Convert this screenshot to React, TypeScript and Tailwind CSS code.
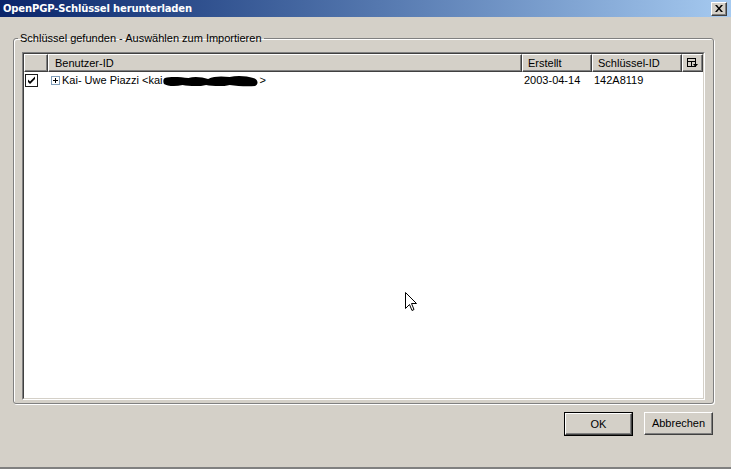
import React from "react";

const raised =
  "border border-t-white border-l-white border-r-[#404040] border-b-[#404040] shadow-[inset_-1px_-1px_0_#808080]";

function HeaderCell({ w, children, className = "" }: { w: string; children?: React.ReactNode; className?: string }) {
  return (
    <div className={`${w} h-[18px] shrink-0 bg-[#d4d0c8] ${raised} flex items-center ${className}`}>
      {children}
    </div>
  );
}

export default function App() {
  return (
    <div className="w-[731px] h-[469px] bg-[#d4d0c8] flex flex-col relative overflow-hidden font-['Liberation_Sans',sans-serif] text-[11px] text-black border-b-2 border-b-[#808080]">
      {/* Title bar */}
      <div className="h-[17px] shrink-0 flex items-center justify-between pl-[3px] pr-[4px] bg-gradient-to-r from-[#0a246a] to-[#a6caf0]">
        <span className="text-white font-bold text-[10px] leading-[13px] tracking-[-0.15px] font-['DejaVu_Sans',sans-serif]">
          OpenPGP-Schlüssel herunterladen
        </span>
        <div className={`w-[16px] h-[14px] bg-[#d4d0c8] ${raised} flex items-center justify-center`}>
          <svg width="8" height="7" viewBox="0 0 8 7">
            <path d="M0 0h2l2 2.5L6 0h2L5 3.5 8 7H6L4 4.5 2 7H0l3-3.5z" fill="#000" />
          </svg>
        </div>
      </div>

      {/* Group box */}
      <fieldset className="mt-[15px] ml-[13px] mr-[17px] h-[372px] border border-[#808080] rounded-[3px] shadow-[inset_1px_1px_0_#fff,1px_1px_0_#fff] px-[8px] pt-[7px] pb-[3px] min-w-0">
        <legend className="ml-[-4px] px-[2px] leading-[13px]">Schlüssel gefunden - Auswählen zum Importieren</legend>
        <div className="h-[348px] border border-t-[#808080] border-l-[#808080] border-r-white border-b-white">
          <div className="h-full bg-white border border-t-[#404040] border-l-[#404040] border-r-[#d4d0c8] border-b-[#d4d0c8] flex flex-col">
            {/* header */}
            <div className="flex h-[18px]">
              <HeaderCell w="w-[24px]" />
              <HeaderCell w="w-[474px]" className="pl-[6px]">Benutzer-ID</HeaderCell>
              <HeaderCell w="w-[70px]" className="pl-[5px]">Erstellt</HeaderCell>
              <HeaderCell w="w-[90px]" className="pl-[5px]">Schlüssel-ID</HeaderCell>
              <HeaderCell w="w-[21px]" className="justify-center">
                <svg width="11" height="10" viewBox="0 0 11 10">
                  <rect x="0.5" y="0.5" width="8" height="8" fill="none" stroke="#000" />
                  <path d="M0.5 3.5h8M4.5 3.5v5" stroke="#000" />
                  <path d="M6 6h5l-2.5 3z" fill="#000" />
                </svg>
              </HeaderCell>
            </div>
            {/* row */}
            <div className="flex h-[17px] items-center">
              <div className="w-[24px] shrink-0 flex items-center pl-[1px]">
                <div className="w-[13px] h-[13px] border border-[#1c1c1c] bg-white flex items-center justify-center">
                  <svg width="9" height="9" viewBox="0 0 9 9">
                    <path d="M1 3.5l2 2 5-5v2.5L3 8 1 6z" fill="#000" />
                  </svg>
                </div>
              </div>
              <div className="w-[474px] shrink-0 flex items-center pl-[3px]">
                <div className="w-[9px] h-[9px] border border-[#7f9db9] bg-white flex items-center justify-center mr-[2px]">
                  <svg width="5" height="5" viewBox="0 0 5 5">
                    <path d="M0 2h5v1H0zM2 0h1v5H2z" fill="#000" />
                  </svg>
                </div>
                <span>Kai- Uwe Piazzi &lt;kai</span>
                <svg width="97" height="14" viewBox="0 0 99 14">
                  <path
                    d="M2 4 C8 2 18 3 26 4 C32 2 40 3 46 5 C52 2 60 2 68 3 C76 1 86 2 92 4 C97 5 98 10 94 12 C86 13 76 12 68 11 C60 13 50 12 44 11 C36 13 26 12 20 11 C12 13 4 12 1 10 C0 8 0 5 2 4 Z"
                    fill="#000"
                  />
                </svg>
                <span>&gt;</span>
              </div>
              <div className="w-[70px] shrink-0 pl-[2px]">2003-04-14</div>
              <div className="w-[90px] shrink-0 pl-[2px]">142A8119</div>
            </div>
          </div>
        </div>
      </fieldset>

      {/* Buttons */}
      <div className="flex justify-end gap-[11px] mt-[8px] pr-[18px]">
        <div className="w-[69px] h-[24px] border border-black">
          <div className={`w-full h-full ${raised} bg-[#d4d0c8] flex items-center justify-center`}>OK</div>
        </div>
        <div className={`w-[69px] h-[23px] ${raised} bg-[#d4d0c8] flex items-center justify-center`}>Abbrechen</div>
      </div>

      {/* cursor */}
      <svg className="absolute left-[405px] top-[292px]" width="12" height="20" viewBox="0 0 12 20">
        <path d="M0.5 0.5 V16.5 L4.5 12.5 L7 18.5 L9 17.5 L6.5 11.5 H11.5 Z" fill="#fff" stroke="#000" strokeWidth="1" />
      </svg>
    </div>
  );
}
